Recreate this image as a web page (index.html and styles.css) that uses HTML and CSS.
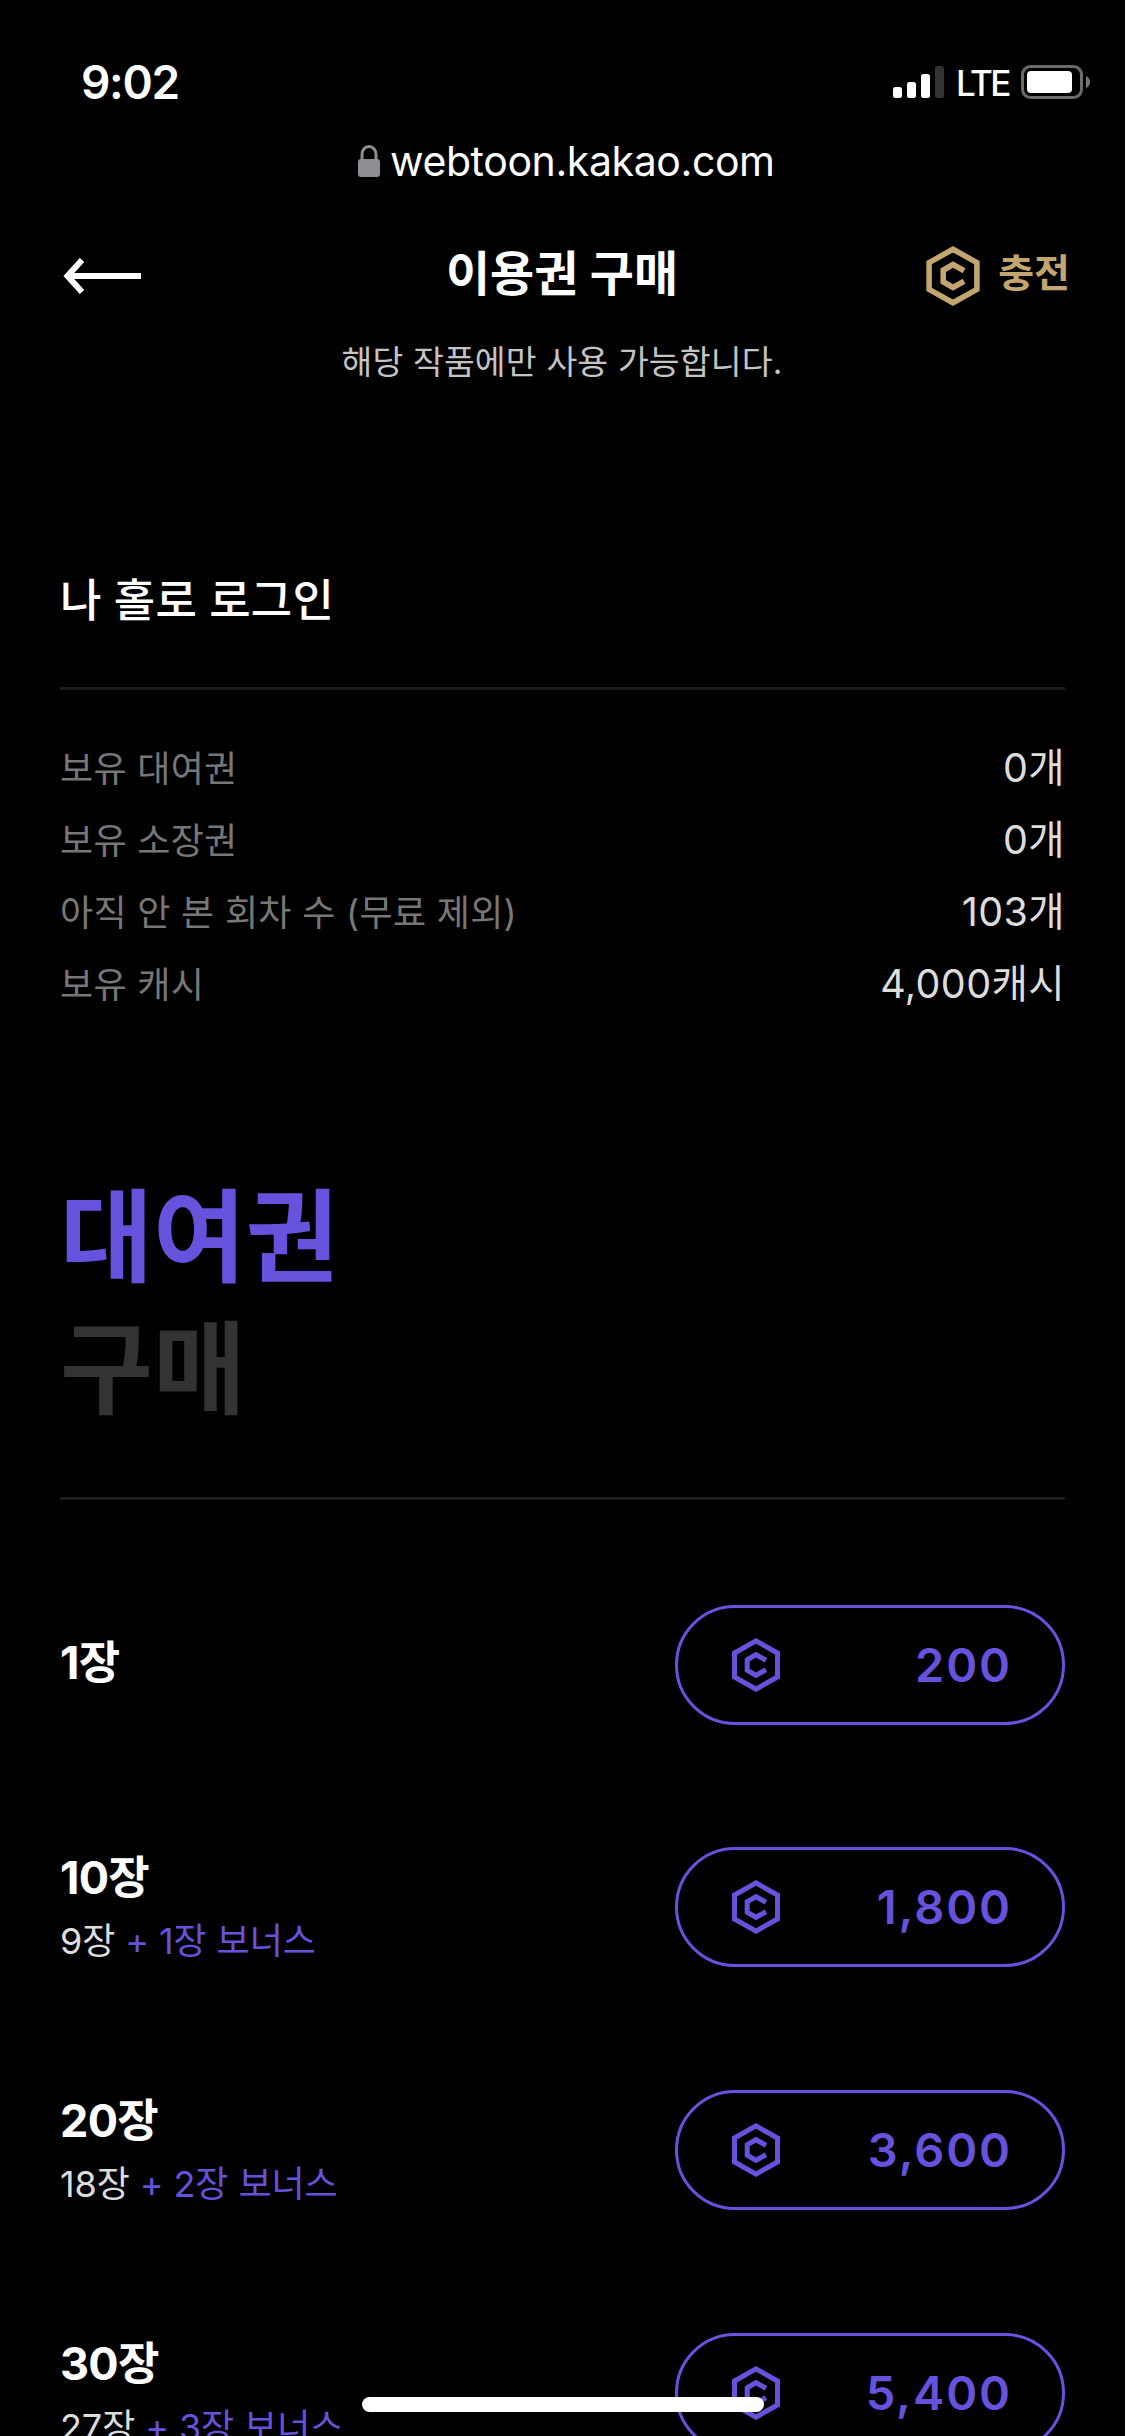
FILE: index.html
```html
<!DOCTYPE html>
<html lang="ko">
<head>
<meta charset="utf-8">
<title>이용권 구매</title>
<link rel="stylesheet" href="styles.css">
</head>
<body>
<svg class="defs" width="0" height="0">
  <symbol id="coin" viewBox="0 0 48 54">
    <path d="M24 2.900 45.500 15v24L24 51.100 2.500 39V15Z" fill="none" stroke="currentColor" stroke-width="5"/>
    <path d="M34 22.300 24 16.700 15.200 21.800v10.400L24 37.300 34 31.700" fill="none" stroke="currentColor" stroke-width="5"/>
  </symbol>
</svg>
<div class="screen">
  <div class="status">
    <span class="time">9:02</span>
    <div class="indicators">
      <svg class="signal" viewBox="0 0 51 32"><rect y="21" width="9" height="11" rx="2.500"/><rect x="14" y="16" width="9" height="16" rx="2.500"/><rect x="28" y="8" width="9" height="24" rx="2.500"/><rect x="42" width="9" height="32" rx="2.500" fill="#333"/></svg>
      <span class="lte">LTE</span>
      <svg class="battery" viewBox="0 0 70 34"><rect x="1.500" y="1.500" width="59" height="31" rx="8" fill="none" stroke="#6b6b6b" stroke-width="3"/><rect x="6" y="6" width="45" height="22" rx="4"/><path d="M65 11q4 2 4 6t-4 6z" fill="#7a7a7a"/></svg>
    </div>
  </div>
  <div class="address">
    <svg class="lock" viewBox="0 0 22 32"><path d="M4 15V9.500a7 8 0 0 1 14 0V15" fill="none" stroke="#8e8e93" stroke-width="3"/><rect y="14" width="22" height="18" rx="3" fill="#8e8e93"/></svg>
    <span class="domain">webtoon.kakao.com</span>
  </div>
  <header class="header">
    <svg class="back" viewBox="0 0 78 36"><path d="M78 18H5M19 2 4.500 18 19 34" fill="none" stroke="#fff" stroke-width="6"/></svg>
    <h1 class="title">이용권 구매</h1>
    <div class="charge"><svg class="charge-coin"><use href="#coin"/></svg><span>충전</span></div>
  </header>
  <p class="notice">해당 작품에만 사용 가능합니다.</p>
  <main class="content">
    <h2 class="work">나 홀로 로그인</h2>
    <dl class="summary">
      <div class="stat"><dt>보유 대여권</dt><dd>0개</dd></div>
      <div class="stat"><dt>보유 소장권</dt><dd>0개</dd></div>
      <div class="stat"><dt>아직 안 본 회차 수 (무료 제외)</dt><dd>103개</dd></div>
      <div class="stat"><dt>보유 캐시</dt><dd>4,000캐시</dd></div>
    </dl>
    <h2 class="heading"><span class="accent">대여권</span><span class="dim">구매</span></h2>
    <div class="offers">
      <div class="offer"><div class="info single"><div class="count">1장</div></div>
        <div class="buy"><svg class="coin"><use href="#coin"/></svg><span>200</span></div></div>
      <div class="offer"><div class="info"><div class="count">10장</div><div class="bonus">9장 <em>+ 1장 보너스</em></div></div>
        <div class="buy"><svg class="coin"><use href="#coin"/></svg><span>1,800</span></div></div>
      <div class="offer"><div class="info"><div class="count">20장</div><div class="bonus">18장 <em>+ 2장 보너스</em></div></div>
        <div class="buy"><svg class="coin"><use href="#coin"/></svg><span>3,600</span></div></div>
      <div class="offer"><div class="info"><div class="count">30장</div><div class="bonus">27장 <em>+ 3장 보너스</em></div></div>
        <div class="buy"><svg class="coin"><use href="#coin"/></svg><span>5,400</span></div></div>
    </div>
  </main>
  <div class="home-bar"></div>
</div>
</body>
</html>
```
FILE: styles.css
```css
* { box-sizing: border-box; margin: 0; padding: 0; }
body { background: #000; color: #fff; font-family: Inter, "Noto Sans CJK KR", sans-serif; white-space: nowrap; }
svg { display: block; flex: none; }
.defs { position: absolute; }
.screen { position: relative; width: 1125px; height: 2436px; overflow: hidden; background: #000; }

.status { height: 122px; padding: 42px 34px 0 81px; display: flex; justify-content: space-between; align-items: center; line-height: 80px; }
.time { font-size: 46px; font-weight: 600; letter-spacing: -1.300px; }
.indicators { display: flex; align-items: center; fill: #fff; }
.signal { width: 51px; height: 32px; }
.lte { font-size: 35px; font-weight: 500; width: 51px; margin: 2px 14px 0 12px; letter-spacing: -2.500px; }
.battery { width: 70px; height: 34px; }

.address { height: 78px; padding-left: 358px; display: flex; align-items: center; gap: 10px; }
.lock { width: 22px; height: 32px; }
.domain { font-size: 41px; line-height: 76px; letter-spacing: -0.400px; }

.header { height: 144px; padding: 0 55px 0 63px; display: grid; grid-template-columns: 1fr auto 1fr; align-items: center; }
.back { width: 78px; height: 36px; margin-top: 8px; }
.title { font-size: 48px; font-weight: 700; line-height: 60px; margin: 3px 9px 0 0; }
.charge { display: flex; align-items: center; justify-content: flex-end; gap: 18px; color: #c2a570; font-size: 39px; font-weight: 700; line-height: 50px; }
.charge span { margin-top: 2px; }
.charge-coin { width: 54px; height: 60px; margin-top: 8px; }
.notice { text-align: center; font-size: 33.500px; font-weight: 400; line-height: 36px; letter-spacing: 0.150px; padding-right: 1px; color: #c4c4c4; }

.content { padding: 190px 60px 0; }
.work { font-size: 45px; font-weight: 500; line-height: 62px; padding-bottom: 55px; border-bottom: 3px solid #1c1c1c; letter-spacing: 0.200px; }
.summary { padding-top: 42px; }
.stat { display: flex; justify-content: space-between; line-height: 72px; }
.stat dt { font-size: 36px; font-weight: 400; color: #777; letter-spacing: 0.300px; padding-top: 1px; margin-bottom: -1px; }
.stat dd { font-size: 39.500px; color: #ddd; letter-spacing: 0.400px; }
.heading { margin-top: 150px; height: 330px; border-bottom: 3px solid #1c1c1c; font-size: 101px; font-weight: 700; line-height: 132px; display: flex; flex-direction: column; padding-top: 1px; }
.accent { color: #6553dd; }
.dim { color: #333; }

.offers { padding-top: 105px; display: flex; flex-direction: column; gap: 122.700px; }
.offer { height: 120px; display: flex; justify-content: space-between; }
.offer:nth-child(2) { margin: -0.700px 0 0.700px; }
.count { font-size: 45px; font-weight: 700; line-height: 62px; letter-spacing: -0.700px; }
.single .count { line-height: 116px; }
.bonus { font-size: 36px; font-weight: 400; line-height: 65px; color: #ddd; letter-spacing: -0.100px; }
.bonus em { font-style: normal; color: #6553dd; }
.buy { width: 390px; height: 120px; border: 3px solid #6553dd; border-radius: 60px; padding: 0 50px 0 54px; display: flex; align-items: center; justify-content: space-between; color: #6553dd; font-size: 47px; font-weight: 600; letter-spacing: 1.900px; line-height: 114px; }
.coin { width: 48px; height: 54px; }
.home-bar { position: absolute; left: 362px; top: 2397px; width: 402px; height: 15px; border-radius: 8px; background: #fff; }
```
